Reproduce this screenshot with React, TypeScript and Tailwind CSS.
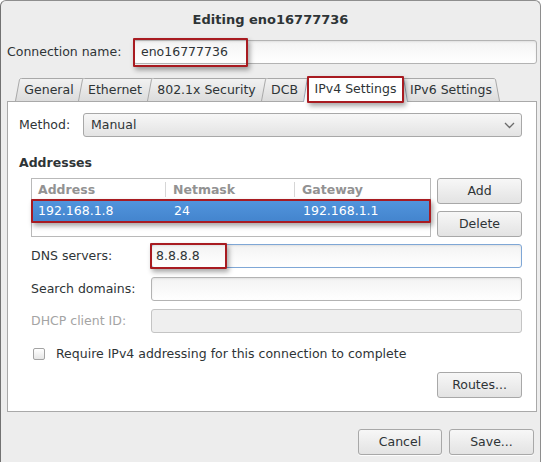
import React from "react";

type TabKind = "left" | "active" | "right";

function Tab({ label, width, kind }: { label: string; width: number; kind: TabKind }) {
  const h = kind === "active" ? 26 : 23;
  const w = width;
  let fill = "";
  let stroke = "";
  if (kind === "left") {
    fill = `M0,${h} L4,1.5 Q4.6,0.5 6,0.5 L${w + 5},0.5 L${w},${h} Z`;
    stroke = `M0.5,${h} L4.5,1.5 Q5,0.5 6.5,0.5 L${w + 5},0.5`;
  } else if (kind === "active") {
    fill = `M0,${h} L4.5,1.5 Q5,0.5 7,0.5 L${w - 7},0.5 Q${w - 5},0.5 ${w - 4.5},1.5 L${w},${h} Z`;
    stroke = `M0.5,${h} L4.5,1.5 Q5,0.5 7,0.5 L${w - 7},0.5 Q${w - 5},0.5 ${w - 4.5},1.5 L${w - 0.5},${h}`;
  } else {
    fill = `M0,0.5 L${w - 8},0.5 Q${w - 6},0.5 ${w - 5.5},1.5 L${w - 1},${h} L0,${h} Z`;
    stroke = `M0,0.5 L${w - 8},0.5 Q${w - 6},0.5 ${w - 5.5},1.5 L${w - 1.5},${h}`;
  }
  const gid = `tabgrad-${label.replace(/[^a-z0-9]/gi, "")}`;
  return (
    <div
      className={
        kind === "active"
          ? "relative z-20 h-[26px] -mr-[5px] flex items-center justify-center pb-[1px] text-[#2e3436]"
          : kind === "right"
          ? "relative z-0 h-[23px] mb-px flex items-center justify-center pr-[2px] text-[#2e3436]"
          : "relative z-10 h-[23px] mb-px flex items-center justify-center pl-[5px] text-[#2e3436]"
      }
      style={{ width: w }}
    >
      <svg
        className="absolute left-0 top-0 overflow-visible pointer-events-none"
        width={w + 6}
        height={h}
      >
        <defs>
          <linearGradient id={gid} x1="0" y1="0" x2="0" y2="1">
            <stop offset="0" stopColor={kind === "active" ? "#ffffff" : "#f2f2f2"} />
            <stop offset="1" stopColor={kind === "active" ? "#ffffff" : "#dcdcdc"} />
          </linearGradient>
        </defs>
        <path d={fill} fill={`url(#${gid})`} />
        <path d={stroke} fill="none" stroke={kind === "active" ? "#9aa7b6" : "#a9a9a9"} strokeWidth="1" />
      </svg>
      <span className="relative whitespace-nowrap">{label}</span>
    </div>
  );
}

function Button({ label, className = "" }: { label: string; className?: string }) {
  return (
    <div
      className={
        "h-[26px] flex items-center justify-center rounded-[3px] border border-[#a8a8a8] bg-gradient-to-b from-[#f7f7f7] to-[#e3e3e3] text-[#2e3436] shadow-[0_1px_0_rgba(255,255,255,0.8)] " +
        className
      }
    >
      {label}
    </div>
  );
}

function Entry({
  value,
  focused,
  disabled,
  className = "",
}: {
  value?: string;
  focused?: boolean;
  disabled?: boolean;
  className?: string;
}) {
  const base = "h-[24px] flex items-center rounded-[3px] border ";
  const look = disabled
    ? "border-[#c4c4c4] bg-[#efefef]"
    : focused
    ? "border-[#7fa7d6] bg-gradient-to-b from-[#f3f3f3] to-white shadow-[inset_0_1px_2px_rgba(0,0,0,0.08)]"
    : "border-[#b3b3b3] bg-gradient-to-b from-[#f3f3f3] to-white shadow-[inset_0_1px_2px_rgba(0,0,0,0.08)]";
  return (
    <div className={base + look + " " + className}>
      {value ? <span className="text-[#2e3436]">{value}</span> : null}
    </div>
  );
}

function Marker({ className }: { className: string }) {
  return (
    <div
      className={
        "absolute border-2 border-[#a81b21] rounded-[1px] shadow-[2px_3px_5px_rgba(0,0,0,0.35)] pointer-events-none z-30 " +
        className
      }
    />
  );
}

export default function App() {
  return (
    <div className="relative w-[542px] h-[462px] bg-white text-[12.5px] leading-[16px] text-[#2e3436] font-['DejaVu_Sans',sans-serif] overflow-hidden">
      <div className="w-[541px] h-[462px] flex flex-col border border-b-0 border-[#8e8e8e] border-l-[#727272] rounded-t-[6px] bg-[#ededed]">
        {/* title */}
        <div className="h-[36px] flex items-center justify-center pt-[2px] text-[13px] font-bold text-[#2e3436]">
          Editing eno16777736
        </div>

        {/* connection name */}
        <div className="mt-[3px] flex items-center pl-[6px] pr-[3px]">
          <div className="w-[126px]">Connection name:</div>
          <Entry value="eno16777736" className="flex-1 pl-[7px]" />
        </div>

        {/* tabs */}
        <div className="mt-[12px] h-[26px] flex items-end pl-[14px] relative z-10">
          <Tab label="General" width={63} kind="left" />
          <Tab label="Ethernet" width={69} kind="left" />
          <Tab label="802.1x Security" width={114} kind="left" />
          <Tab label="DCB" width={42} kind="left" />
          <Tab label="IPv4 Settings" width={105} kind="active" />
          <Tab label="IPv6 Settings" width={98} kind="right" />
        </div>

        {/* notebook page */}
        <div className="-mt-px ml-[6px] w-[530px] h-[311px] border border-[#a9a9a9] bg-white flex flex-col pt-[11px] pl-[11px] pr-[14px]">
          <div className="flex items-center">
            <div className="w-[64px]">Method:</div>
            <div className="flex-1 h-[24px] flex items-center justify-between pl-[7px] pr-[6px] rounded-[3px] border border-[#a8a8a8] bg-gradient-to-b from-[#f7f7f7] to-[#e3e3e3]">
              <span>Manual</span>
              <svg width="11" height="7" viewBox="0 0 11 7">
                <polyline points="1,1 5.5,5.5 10,1" fill="none" stroke="#6b6b6b" strokeWidth="1.3" />
              </svg>
            </div>
          </div>

          <div className="mt-[18px] font-bold">Addresses</div>

          <div className="mt-[7px] flex pl-[12px] gap-[6px]">
            <div className="w-[400px] h-[59px] border border-[#b9b9b9] bg-white flex flex-col">
              <div className="h-[21px] flex items-center font-bold text-[#929292]">
                <div className="w-[134px] pl-[6px] h-[15px] flex items-center border-r border-[#d6d6d6]">Address</div>
                <div className="w-[129px] pl-[7px] h-[15px] flex items-center border-r border-[#d6d6d6]">Netmask</div>
                <div className="flex-1 pl-[7px]">Gateway</div>
              </div>
              <div className="h-[22px] flex items-center bg-gradient-to-b from-[#5295dd] to-[#4384cd] text-white">
                <div className="w-[134px] pl-[6px]">192.168.1.8</div>
                <div className="w-[129px] pl-[8px]">24</div>
                <div className="flex-1 pl-[8px]">192.168.1.1</div>
              </div>
            </div>
            <div className="w-[85px] flex flex-col gap-[7px]">
              <Button label="Add" />
              <Button label="Delete" />
            </div>
          </div>

          <div className="mt-[7px] flex items-center pl-[12px]">
            <div className="w-[120px]">DNS servers:</div>
            <Entry value="8.8.8.8" focused className="flex-1 pl-[4px]" />
          </div>
          <div className="mt-[9px] flex items-center pl-[12px]">
            <div className="w-[120px]">Search domains:</div>
            <Entry className="flex-1" />
          </div>
          <div className="mt-[8px] flex items-center pl-[12px]">
            <div className="w-[120px] text-[#a4a4a4]">DHCP client ID:</div>
            <Entry disabled className="flex-1" />
          </div>

          <div className="mt-[14px] h-[13px] flex items-center pl-[14px]">
            <div className="w-[12px] h-[12px] rounded-[2px] border border-[#a3a3a3] bg-gradient-to-b from-white to-[#e6e6e6]" />
            <div className="ml-[11px]">Require IPv4 addressing for this connection to complete</div>
          </div>

          <div className="mt-[12px] flex justify-end">
            <Button label="Routes..." className="w-[85px]" />
          </div>
        </div>

        {/* dialog buttons */}
        <div className="mt-[17px] flex justify-end gap-[7px] pr-[6px]">
          <Button label="Cancel" className="w-[84px]" />
          <Button label="Save..." className="w-[85px]" />
        </div>
      </div>

      <Marker className="left-[133px] top-[38px] w-[115px] h-[29px]" />
      <Marker className="left-[307px] top-[76px] w-[97px] h-[27px]" />
      <Marker className="left-[31px] top-[199px] w-[400px] h-[24px]" />
      <Marker className="left-[150px] top-[243px] w-[77px] h-[26px]" />
    </div>
  );
}
